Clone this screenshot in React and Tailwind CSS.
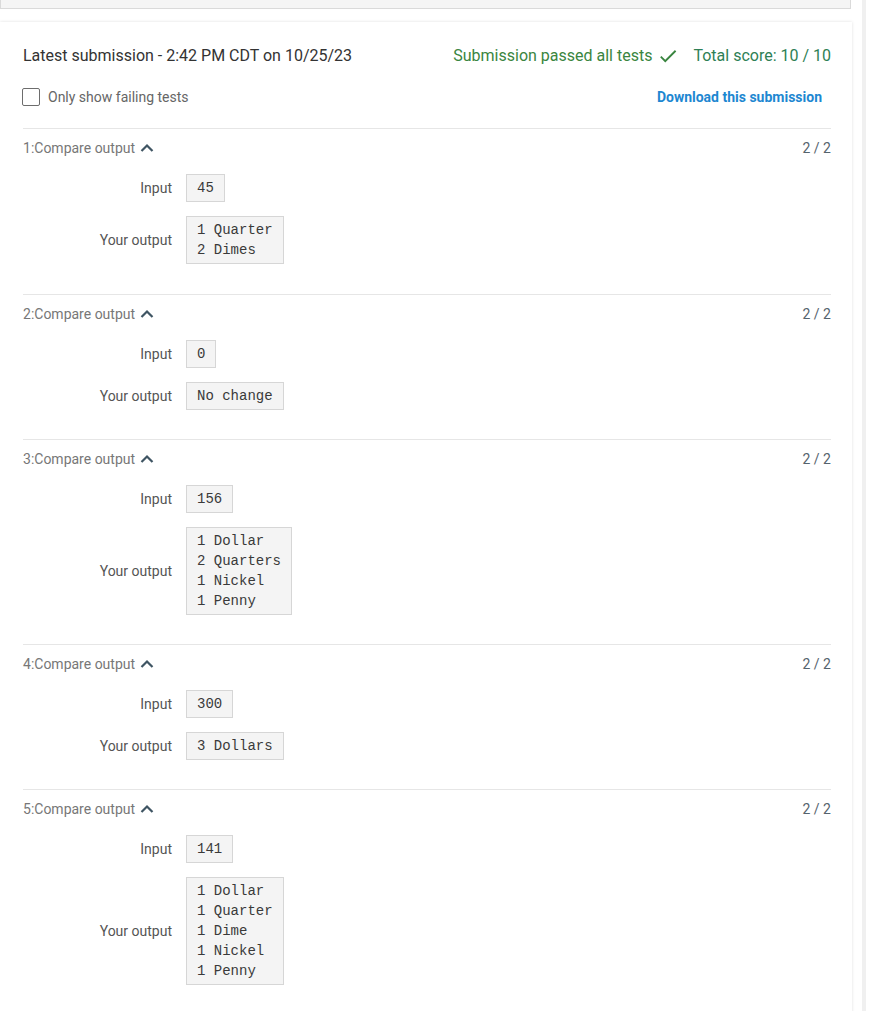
import React from 'react';

const tests = [
	{ n: 1, input: '45', output: ['1 Quarter', '2 Dimes'] },
	{ n: 2, input: '0', output: ['No change'] },
	{ n: 3, input: '156', output: ['1 Dollar', '2 Quarters', '1 Nickel', '1 Penny'] },
	{ n: 4, input: '300', output: ['3 Dollars'] },
	{ n: 5, input: '141', output: ['1 Dollar', '1 Quarter', '1 Dime', '1 Nickel', '1 Penny'] },
];

function ChevronUp() {
	return (
		<svg width="14" height="14" viewBox="0 0 14 14" className="ml-[5px]">
			<path d="M1.5 10L7 4.5L12.5 10" fill="none" stroke="#3f5563" strokeWidth="2.2" />
		</svg>
	);
}

function Check() {
	return (
		<svg width="22" height="22" viewBox="0 0 24 24" className="ml-[5px]">
			<path d="M9 16.17L4.83 12l-1.42 1.41L9 19 21 7l-1.41-1.41z" fill="#3a8540" />
		</svg>
	);
}

function CodeBox({ lines }) {
	return (
		<pre
			className="border border-[#d6d6d6] bg-[#f4f4f4] px-[10px] py-[3px] text-[14px] leading-[20px] text-[#3a3a3a]"
			style={{ fontFamily: '"Liberation Mono", "Courier New", monospace' }}
		>
			{lines.join('\n')}
		</pre>
	);
}

function TestResult({ test }) {
	return (
		<div className={`border-t border-[#e6e6e6] pt-[9px] ${test.n === 1 ? 'pb-[30px]' : 'pb-[29px]'}`}>
			<div className="flex items-center justify-between h-[20px]">
				<div className="flex items-center text-[14px] text-[#777]">
					{test.n}:Compare output
					<ChevronUp />
				</div>
				<span className="text-[14px] text-[#55636d]">2 / 2</span>
			</div>
			<div className="flex items-center mt-4">
				<span className="w-[149px] text-right text-[14px] text-[#555]">Input</span>
				<div className="ml-[14px]">
					<CodeBox lines={[test.input]} />
				</div>
			</div>
			<div className="flex items-center mt-[14px]">
				<span className="w-[149px] text-right text-[14px] text-[#555]">Your output</span>
				<div className="ml-[14px]">
					<CodeBox lines={test.output} />
				</div>
			</div>
		</div>
	);
}

export default function App() {
	return (
		<div className="flex min-h-[1011px] bg-white" style={{ fontFamily: 'Roboto, "Liberation Sans", sans-serif' }}>
			<div className="w-[852px]">
				<div className="h-[9px] w-[851px] bg-[#f5f5f5] border-b border-r border-l border-[#dadada]" />

				<div className="mt-[13px] bg-white shadow-[0_0_3px_rgba(0,0,0,0.13)] pl-[23px] pr-[21px] pt-[22px] pb-[4px]">
					<div className="flex items-center justify-between h-[24px]">
						<span className="text-[16px] text-[#333]">Latest submission - 2:42 PM CDT on 10/25/23</span>
						<div className="flex items-center text-[16px]">
							<span className="text-[#3a8540]">Submission passed all tests</span>
							<Check />
							<span className="ml-[14px] text-[#2e7f55]">Total score: 10 / 10</span>
						</div>
					</div>

					<div className="flex items-center justify-between h-[24px] mt-[17px] mb-[19px]">
						<label className="flex items-center">
							<span className="w-[18px] h-[18px] border-[1.5px] border-[#6d6d6d] rounded-[2px] ml-[-1px]" />
							<span className="ml-[8px] text-[14px] text-[#666]">Only show failing tests</span>
						</label>
						<a className="text-[14px] font-bold text-[#1d87d1] mr-[9px]">Download this submission</a>
					</div>

					{tests.map(t => (
						<TestResult key={t.n} test={t} />
					))}
				</div>
			</div>
			<div className="ml-[10px] w-[4px] bg-[#f0f0f0]" />
		</div>
	);
}
